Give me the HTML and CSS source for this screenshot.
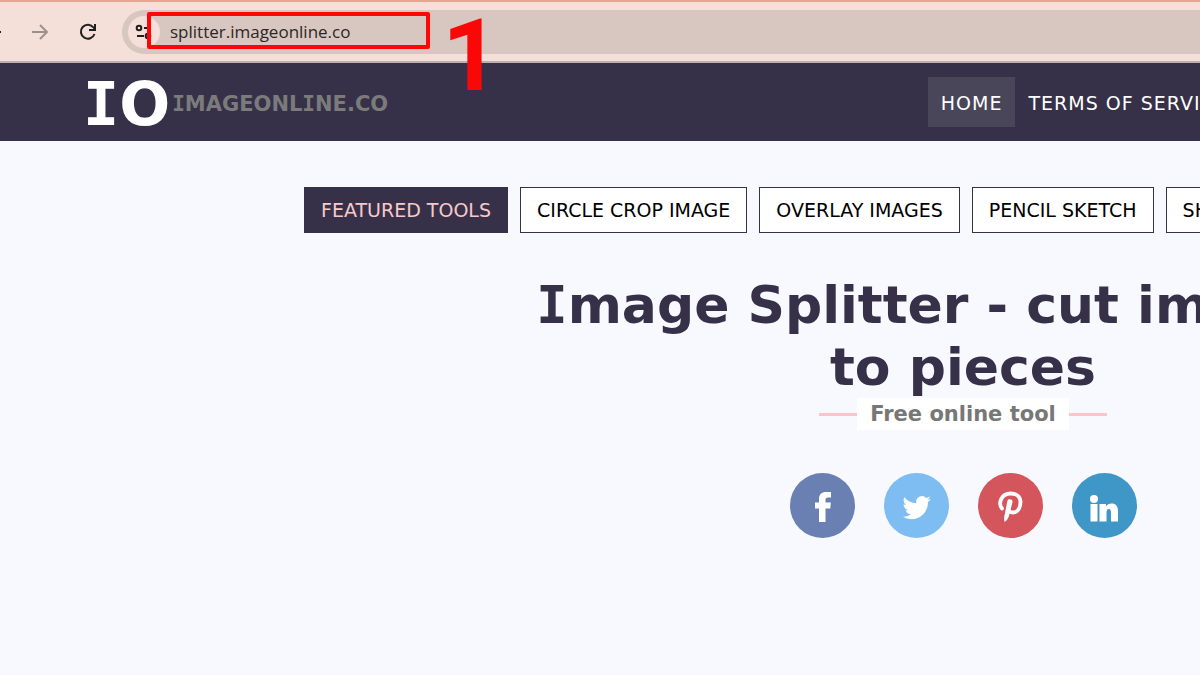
FILE: index.html
```
<!DOCTYPE html>
<html lang="en">
<head>
  <meta charset="utf-8">
  <title>Image Splitter</title>
  <link rel="stylesheet" href="styles.css">
</head>
<body>
  <div class="browser-bar">
    <button class="bar-button back" aria-label="Back"></button>
    <button class="bar-button" aria-label="Forward">
      <svg width="18" height="18" viewBox="0 0 18 18" fill="none" stroke="#9d908c" stroke-width="2">
        <path d="M1 9h15M9 2l7 7-7 7"/>
      </svg>
    </button>
    <button class="bar-button reload" aria-label="Reload">
      <svg width="18" height="18" viewBox="0 0 18 18" fill="none" stroke="#1f1f1f" stroke-width="2">
        <path d="M15.5 11A7 7 0 1 1 14.5 4.5L16 6.500"/>
        <path d="M16 1v6h-6"/>
      </svg>
    </button>
    <div class="address">
      <button class="site-info" aria-label="Site information">
        <svg width="18" height="18" viewBox="0 0 18 18" fill="none" stroke="#1f1f1f" stroke-width="2">
          <circle cx="4" cy="5" r="2.300"/>
          <path d="M9 5h7M2 13h7"/>
          <circle cx="13" cy="13" r="2.300"/>
        </svg>
      </button>
      <input class="url" type="text" value="splitter.imageonline.co" aria-label="Address">
      <div class="marker"></div>
      <span class="step">1</span>
    </div>
  </div>

  <div class="page">
    <header class="header">
      <a class="logo" href="#">
        <span class="logo-mark"><span class="slab">I</span>O</span>
        <span class="logo-name"><span class="slab">I</span>MAGEONL<span class="slab">I</span>NE.CO</span>
      </a>
      <nav class="nav">
        <a class="active" href="#">HOME</a>
        <a href="#">TERMS OF SERVICE</a>
      </nav>
    </header>

    <main>
      <nav class="tools">
        <a class="featured" href="#">FEATURED TOOLS</a>
        <a href="#">CIRCLE CROP IMAGE</a>
        <a href="#">OVERLAY IMAGES</a>
        <a href="#">PENCIL SKETCH</a>
        <a href="#">SHARPEN IMAGE</a>
      </nav>

      <h1><span class="slab">I</span>mage Splitter - cut image in to pieces</h1>
      <p class="tagline"><span>Free online tool</span></p>

      <div class="social">
        <a class="facebook" href="#" aria-label="Facebook">
          <svg viewBox="0 0 65 65" fill="#fff">
            <path d="M29 49V35.500h-4V29.500h4v-3.500c0-4.700 2.600-7 7-7h5v5.500h-3c-1.800 0-2.500.7-2.500 2.300v2.700h5.300l-.5 6H35.500V49z"/>
          </svg>
        </a>
        <a class="twitter" href="#" aria-label="Twitter">
          <svg viewBox="0 0 65 65">
            <path fill="#fff" transform="translate(18.500 20.500) scale(1.180)" d="M23.950 4.570a10 10 0 0 1-2.820.770 4.960 4.960 0 0 0 2.160-2.720c-.950.550-2 .950-3.130 1.180a4.920 4.920 0 0 0-8.380 4.480C7.690 8.090 4.070 6.130 1.640 3.160a4.920 4.920 0 0 0 1.520 6.570 4.900 4.900 0 0 1-2.230-.610v.060a4.920 4.920 0 0 0 3.950 4.830 5 5 0 0 1-2.210.080 4.940 4.940 0 0 0 4.600 3.420A9.870 9.870 0 0 1 0 19.540a14 14 0 0 0 7.550 2.210c9.050 0 14-7.500 14-13.980 0-.210 0-.420-.020-.630a9.900 9.900 0 0 0 2.420-2.570z"/>
          </svg>
        </a>
        <a class="pinterest" href="#" aria-label="Pinterest">
          <svg viewBox="0 0 65 65" fill="none" stroke="#fff" stroke-linecap="round">
            <path stroke-width="3.800" d="M24 35.500c-4-5-1-15 8.500-15 7 0 10 4 10 8.500 0 6-3 10.500-7.500 10.500-3 0-4.500-1.500-5-3"/>
            <path fill="#fff" stroke="none" d="M29.500 27.500c1-2 5.500-1.500 5 1.500l-3 12c-1 4-2 6-5 8-.8-3-.3-5 .5-9z"/>
          </svg>
        </a>
        <a class="linkedin" href="#" aria-label="LinkedIn">
          <svg viewBox="0 0 65 65" fill="#fff">
            <circle cx="22" cy="26" r="4"/>
            <path d="M18.500 31h7v17.500h-7zM27.500 31h6.500v2.500c1-1.800 3-3 5.500-3 5 0 6.500 3.500 6.500 8.500v9.500h-7v-8.500c0-2.500-.5-4-2.200-4s-2.300 1.500-2.300 4v8.500h-7z"/>
          </svg>
        </a>
      </div>
    </main>
  </div>
</body>
</html>
```
FILE: styles.css
```
* {
  box-sizing: border-box;
}

body {
  margin: 0;
  background: #f8f9ff;
  font-family: Verdana, "DejaVu Sans", sans-serif;
  overflow: hidden;
}

a {
  text-decoration: none;
}

button {
  padding: 0;
  border: 0;
  background: none;
}

/* capital I with serifs */
.slab {
  font-family: Verdana, "DejaVu Sans Mono", monospace;
}

.browser-bar {
  display: flex;
  align-items: center;
  height: 63px;
  border-top: 2px solid #eba394;
  border-bottom: 2px solid #bfb0ad;
  background: #f5e0d9;
}

.bar-button {
  display: flex;
  margin-left: 30px;
}

.bar-button.back {
  width: 1px;
  height: 2px;
  margin: 0;
  background: #1f1f1f;
}

.bar-button svg {
  display: block;
}

.address {
  position: relative;
  display: flex;
  flex: 1;
  align-items: center;
  height: 44px;
  margin-left: 25px;
  padding-left: 6px;
  border-radius: 22px 0 0 22px;
  background: #d8c6c0;
}

.site-info {
  display: flex;
  align-items: center;
  justify-content: center;
  width: 32px;
  height: 32px;
  border-radius: 50%;
  background: #f5e0d9;
}

.url {
  flex: 1;
  margin-left: 10px;
  padding: 0;
  border: 0;
  background: none;
  color: #2b2624;
  font: 17px "Segoe UI", "Open Sans", sans-serif;
}

.marker {
  position: absolute;
  top: 2px;
  left: 25px;
  width: 283px;
  height: 37px;
  border: 4px solid #ff0505;
  border-radius: 2px;
}

.step {
  position: absolute;
  top: 2px;
  left: 320px;
  color: #fa0808;
  font: bold 101px/88px Roboto, sans-serif;
}

/* wide desktop layout, runs past the right edge of small windows */
.page {
  min-width: 1926px;
}

.header {
  display: grid;
  grid-template-columns: 12fr 13fr;
  align-items: center;
  height: 78px;
  padding: 0 83px;
  background: #363148;
}

.logo {
  display: flex;
  align-items: center;
  gap: 2px;
  padding-top: 4px;
  font-weight: bold;
}

.logo-mark {
  color: #fff;
  font-size: 60px;
  line-height: 74px;
}

.logo-name {
  color: #7b7b7b;
  font-size: 21px;
}

.nav {
  display: flex;
}

.nav a {
  padding: 2px 13px 0;
  color: #fff;
  font-size: 19px;
  line-height: 48px;
  letter-spacing: 1px;
}

.nav .active {
  background: #4a465a;
}

.tools {
  display: flex;
  gap: 12px;
  padding: 46px 0 41px 304px;
}

.tools a {
  padding: 0 16px;
  border: 1px solid #363148;
  background: #fff;
  color: #000;
  font-size: 19px;
  line-height: 44px;
}

.tools .featured {
  background: #363148;
  color: #f9c9c9;
}

h1 {
  max-width: 900px;
  margin: 0 auto;
  color: #363148;
  font-size: 52px;
  line-height: 62px;
  text-align: center;
}

.tagline {
  display: flex;
  align-items: center;
  justify-content: center;
  margin: 0;
  color: #777;
  font-size: 21px;
  font-weight: bold;
  line-height: 32px;
}

.tagline::before,
.tagline::after {
  content: "";
  width: 38px;
  height: 3px;
  background: #f9c5c8;
}

.tagline span {
  padding: 0 13px;
  background: #fff;
}

.social {
  display: flex;
  justify-content: center;
  gap: 29px;
  margin-top: 43px;
}

.social a {
  width: 65px;
  height: 65px;
  border-radius: 50%;
}

.social svg {
  display: block;
}

.facebook {
  background: #6a80b3;
}

.twitter {
  background: #7dbdf2;
}

.pinterest {
  background: #d5555d;
}

.linkedin {
  background: #3f97c7;
}
```
